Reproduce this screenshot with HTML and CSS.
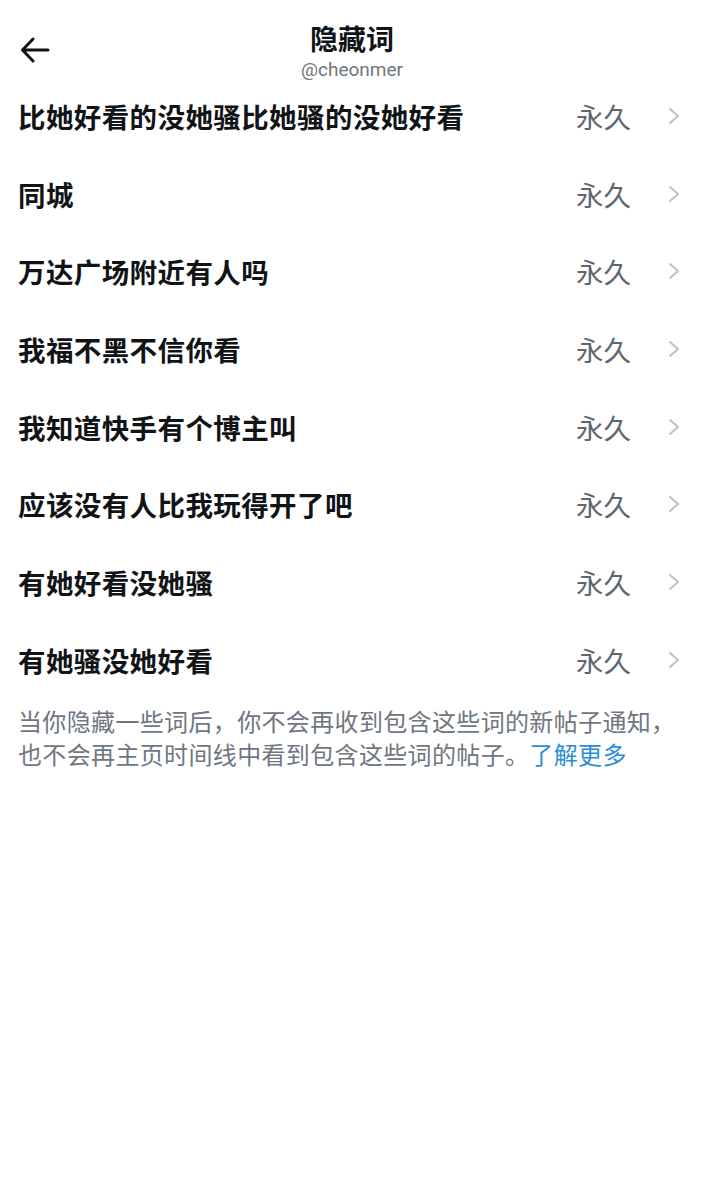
FILE: index.html
```html
<!DOCTYPE html>
<html lang="zh-CN">
<head>
<meta charset="utf-8">
<link rel="stylesheet" href="styles.css">
</head>
<body>
<header class="header">
  <div class="back">
    <svg width="30" height="26" viewBox="0 0 30 26"><path d="M28 13H3M13 2L2.5 13L13 24" fill="none" stroke="#0f1419" stroke-width="3" stroke-linecap="round" stroke-linejoin="round"/></svg>
  </div>
  <div class="titles">
    <div class="title">隐藏词</div>
    <div class="sub">@cheonmer</div>
  </div>
</header>
<ul class="list">
  <li class="row"><span class="word">比她好看的没她骚比她骚的没她好看</span><span class="dur">永久</span><svg class="chev" width="14" height="18" viewBox="0 0 14 18"><path d="M3 2l8 7-8 7" fill="none" stroke="#b8bfc6" stroke-width="1.8" stroke-linecap="round" stroke-linejoin="round"/></svg></li>
  <li class="row"><span class="word">同城</span><span class="dur">永久</span><svg class="chev" width="14" height="18" viewBox="0 0 14 18"><path d="M3 2l8 7-8 7" fill="none" stroke="#b8bfc6" stroke-width="1.8" stroke-linecap="round" stroke-linejoin="round"/></svg></li>
  <li class="row"><span class="word">万达广场附近有人吗</span><span class="dur">永久</span><svg class="chev" width="14" height="18" viewBox="0 0 14 18"><path d="M3 2l8 7-8 7" fill="none" stroke="#b8bfc6" stroke-width="1.8" stroke-linecap="round" stroke-linejoin="round"/></svg></li>
  <li class="row"><span class="word">我福不黑不信你看</span><span class="dur">永久</span><svg class="chev" width="14" height="18" viewBox="0 0 14 18"><path d="M3 2l8 7-8 7" fill="none" stroke="#b8bfc6" stroke-width="1.8" stroke-linecap="round" stroke-linejoin="round"/></svg></li>
  <li class="row"><span class="word">我知道快手有个博主叫</span><span class="dur">永久</span><svg class="chev" width="14" height="18" viewBox="0 0 14 18"><path d="M3 2l8 7-8 7" fill="none" stroke="#b8bfc6" stroke-width="1.8" stroke-linecap="round" stroke-linejoin="round"/></svg></li>
  <li class="row"><span class="word">应该没有人比我玩得开了吧</span><span class="dur">永久</span><svg class="chev" width="14" height="18" viewBox="0 0 14 18"><path d="M3 2l8 7-8 7" fill="none" stroke="#b8bfc6" stroke-width="1.8" stroke-linecap="round" stroke-linejoin="round"/></svg></li>
  <li class="row"><span class="word">有她好看没她骚</span><span class="dur">永久</span><svg class="chev" width="14" height="18" viewBox="0 0 14 18"><path d="M3 2l8 7-8 7" fill="none" stroke="#b8bfc6" stroke-width="1.8" stroke-linecap="round" stroke-linejoin="round"/></svg></li>
  <li class="row"><span class="word">有她骚没她好看</span><span class="dur">永久</span><svg class="chev" width="14" height="18" viewBox="0 0 14 18"><path d="M3 2l8 7-8 7" fill="none" stroke="#b8bfc6" stroke-width="1.8" stroke-linecap="round" stroke-linejoin="round"/></svg></li>
</ul>
<p class="note">当你隐藏一些词后，你不会再收到包含这些词的新帖子通知，也不会再主页时间线中看到包含这些词的帖子。<a class="link">了解更多</a></p>
</body>
</html>
```
FILE: styles.css
```css
html, body {
  margin: 0;
  padding: 0;
  background: #ffffff;
}
body {
  font-family: "Noto Sans CJK SC", "Noto Sans", sans-serif;
  color: #0f1419;
  width: 704px;
}
.header {
  position: relative;
  height: 77px;
  display: flex;
  justify-content: center;
}
.back {
  position: absolute;
  left: 20px;
  top: 37px;
  width: 30px;
  height: 26px;
}
.back svg { display: block; }
.titles {
  display: flex;
  flex-direction: column;
  align-items: center;
  padding-top: 19px;
}
.title {
  font-size: 28px;
  font-weight: 700;
  line-height: 38px;
  height: 38px;
}
.sub {
  font-family: Roboto, "Liberation Sans", sans-serif;
  font-size: 19px;
  line-height: 24px;
  color: #6f767c;
  margin-top: 1px;
}
.list {
  list-style: none;
  margin: 0;
  padding: 0;
}
.row {
  height: 77.7px;
  display: flex;
  align-items: center;
  padding: 0 23px 0 18px;
}
.word {
  flex: 1;
  font-size: 27.5px;
  font-weight: 700;
  letter-spacing: 0.4px;
  color: #111417;
}
.dur {
  font-size: 27.5px;
  color: #5e676f;
  margin-right: 36px;
}
.chev { display: block; }
.note {
  margin: 5px 0 0;
  padding: 0 18px;
  font-size: 24px;
  line-height: 33px;
  letter-spacing: 0.35px;
  color: #6e777f;
}
.link {
  color: #2a8fd6;
}
```
